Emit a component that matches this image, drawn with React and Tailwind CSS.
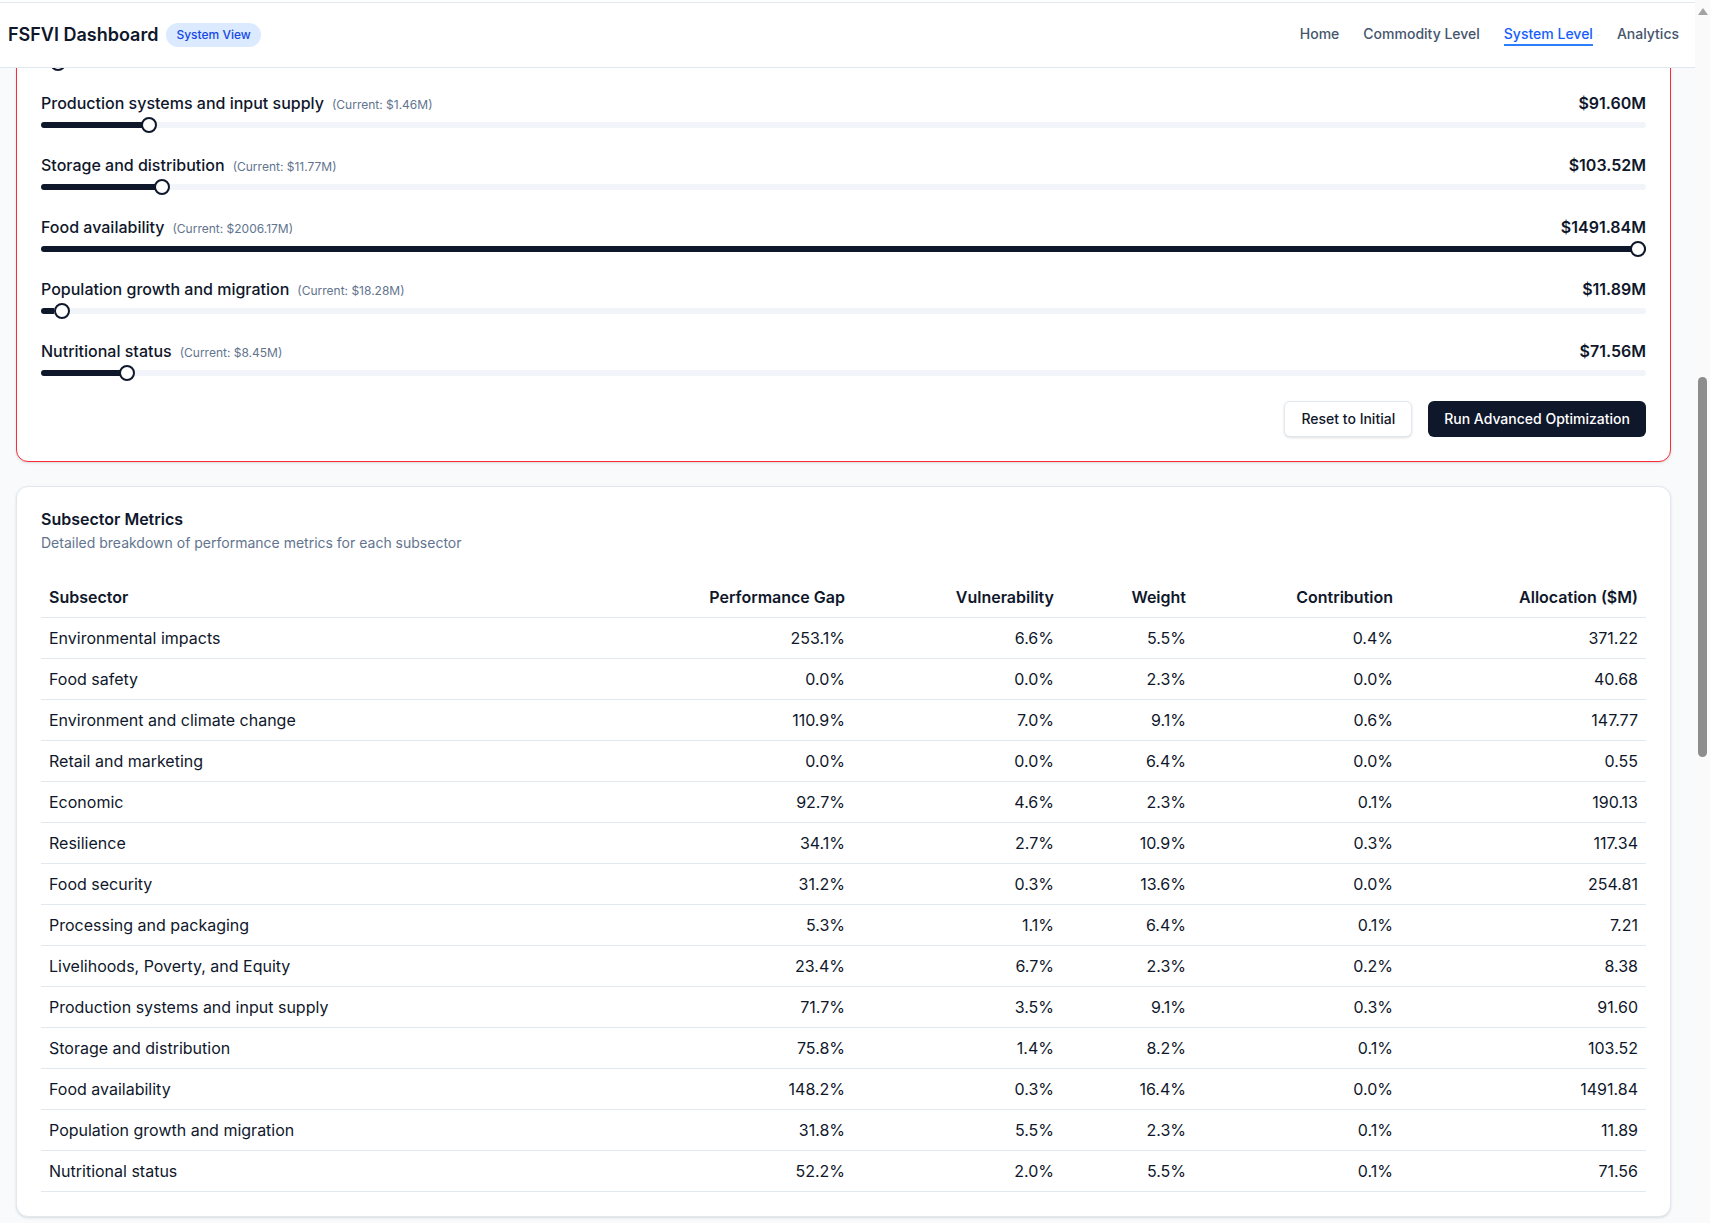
import React, { useLayoutEffect, useEffect, useRef, useState } from "react";

const rows = [
  { name: "Environmental impacts", gap: "253.1%", vul: "6.6%", w: "5.5%", c: "0.4%", a: "371.22", cur: "$41.07M" },
  { name: "Food safety", gap: "0.0%", vul: "0.0%", w: "2.3%", c: "0.0%", a: "40.68", cur: "$52.90M" },
  { name: "Environment and climate change", gap: "110.9%", vul: "7.0%", w: "9.1%", c: "0.6%", a: "147.77", cur: "$23.18M" },
  { name: "Retail and marketing", gap: "0.0%", vul: "0.0%", w: "6.4%", c: "0.0%", a: "0.55", cur: "$0.31M" },
  { name: "Economic", gap: "92.7%", vul: "4.6%", w: "2.3%", c: "0.1%", a: "190.13", cur: "$12.64M" },
  { name: "Resilience", gap: "34.1%", vul: "2.7%", w: "10.9%", c: "0.3%", a: "117.34", cur: "$30.02M" },
  { name: "Food security", gap: "31.2%", vul: "0.3%", w: "13.6%", c: "0.0%", a: "254.81", cur: "$402.55M" },
  { name: "Processing and packaging", gap: "5.3%", vul: "1.1%", w: "6.4%", c: "0.1%", a: "7.21", cur: "$2.12M" },
  { name: "Livelihoods, Poverty, and Equity", gap: "23.4%", vul: "6.7%", w: "2.3%", c: "0.2%", a: "8.38", cur: "$4.73M", pct: 0.57 },
  { name: "Production systems and input supply", gap: "71.7%", vul: "3.5%", w: "9.1%", c: "0.3%", a: "91.60", cur: "$1.46M", pct: 6.32, anchor: true },
  { name: "Storage and distribution", gap: "75.8%", vul: "1.4%", w: "8.2%", c: "0.1%", a: "103.52", cur: "$11.77M", pct: 7.11 },
  { name: "Food availability", gap: "148.2%", vul: "0.3%", w: "16.4%", c: "0.0%", a: "1491.84", cur: "$2006.17M", pct: 100 },
  { name: "Population growth and migration", gap: "31.8%", vul: "5.5%", w: "2.3%", c: "0.1%", a: "11.89", cur: "$18.28M", pct: 0.79 },
  { name: "Nutritional status", gap: "52.2%", vul: "2.0%", w: "5.5%", c: "0.1%", a: "71.56", cur: "$8.45M", pct: 4.91 },
];

function pctOf(r) {
  if (r.pct !== undefined) return r.pct;
  return Math.min(100, (parseFloat(r.a) / 1491.84) * 100);
}

function Slider({ pct }) {
  return (
    <div className="relative flex h-4 w-full items-center">
      <div className="relative h-1.5 w-full overflow-hidden rounded-full bg-slate-100">
        <div className="absolute inset-y-0 left-0 bg-slate-900" style={{ width: `${pct}%` }} />
      </div>
      <span
        className="absolute top-0 h-4 w-4 rounded-full border-2 border-slate-900 bg-white"
        style={{ left: `calc(${pct}% - ${(pct * 16) / 100}px)` }}
      />
    </div>
  );
}

function StatCard({ label, value, sub }) {
  return (
    <div className="rounded-xl border border-slate-200 bg-white p-6 shadow-sm">
      <div className="text-sm font-medium text-slate-500">{label}</div>
      <div className="mt-2 text-2xl font-bold text-slate-900">{value}</div>
      <div className="mt-1 text-xs text-slate-500">{sub}</div>
    </div>
  );
}

function Field({ label, value }) {
  return (
    <div>
      <div className="text-sm font-medium text-slate-700">{label}</div>
      <div className="mt-2 flex h-10 items-center rounded-md border border-slate-200 bg-white px-3 text-sm text-slate-900">
        {value}
      </div>
    </div>
  );
}

export default function App() {
  const scrollRef = useRef(null);
  const anchorRef = useRef(null);
  const [thumb, setThumb] = useState({ top: 377, height: 380 });

  const updateThumb = () => {
    const s = scrollRef.current;
    if (!s) return;
    const track = s.clientHeight - 30;
    const len = Math.max(20, (track * s.clientHeight) / s.scrollHeight);
    const range = s.scrollHeight - s.clientHeight;
    const top = 15 + (range > 0 ? (s.scrollTop / range) * (track - len) : 0);
    setThumb({ top, height: len });
  };

  const adjust = () => {
    const s = scrollRef.current;
    const a = anchorRef.current;
    if (!s || !a) return;
    const delta = a.getBoundingClientRect().top - s.getBoundingClientRect().top - 91;
    s.scrollTop = s.scrollTop + delta;
    updateThumb();
  };

  useLayoutEffect(() => {
    adjust();
  }, []);

  useEffect(() => {
    if (document.fonts && document.fonts.ready) {
      document.fonts.ready.then(adjust);
    }
  }, []);

  return (
    <div className="flex h-screen bg-slate-50 font-['Inter',sans-serif] text-slate-900">
      <div
        ref={scrollRef}
        onScroll={updateThumb}
        className="min-w-0 flex-1 overflow-y-scroll [scrollbar-width:none] [&::-webkit-scrollbar]:hidden"
      >
        <header className="sticky top-0 z-20 bg-white">
          <div className="h-[2px]" />
          <div className="flex h-[66px] items-center justify-between border-y border-slate-200 pl-2 pr-4">
            <div className="flex items-center gap-2">
              <span className="text-lg font-semibold text-slate-900">FSFVI Dashboard</span>
              <span className="rounded-full bg-blue-100 px-2.5 py-1 text-xs font-medium leading-4 text-blue-700">
                System View
              </span>
            </div>
            <nav className="flex items-center gap-6 text-sm font-medium">
              <a className="border-b-2 border-transparent text-slate-600">Home</a>
              <a className="border-b-2 border-transparent text-slate-600">Commodity Level</a>
              <a className="border-b-2 border-blue-500 text-blue-600">System Level</a>
              <a className="border-b-2 border-transparent text-slate-600">Analytics</a>
            </nav>
          </div>
        </header>

        <main className="space-y-6 pb-6 pl-4 pr-6 pt-6">
          <div>
            <h1 className="text-2xl font-bold text-slate-900">System-Level Analysis</h1>
            <p className="mt-1 text-sm text-slate-500">
              Food System Financial Vulnerability Index across all subsectors
            </p>
          </div>

          <div className="grid grid-cols-4 gap-6">
            <StatCard label="FSFVI Score" value="0.0342" sub="Lower is better" />
            <StatCard label="Total Budget" value="$2,930.52M" sub="Across 14 subsectors" />
            <StatCard label="Subsectors" value="14" sub="Active in analysis" />
            <StatCard label="Projected Improvement" value="18.4%" sub="After optimization" />
          </div>

          <div className="rounded-xl border border-slate-200 bg-white shadow-sm">
            <div className="p-6">
              <div className="text-base font-semibold leading-none">Optimization Settings</div>
              <div className="mt-1.5 text-sm text-slate-500">Configure constraints for the optimizer</div>
            </div>
            <div className="grid grid-cols-3 gap-x-4 gap-y-1 px-6 pb-6">
              <Field label="Budget constraint" value="$2,930.52M" />
              <Field label="Method" value="Hybrid gradient" />
              <Field label="Minimum allocation" value="$0.10M" />
              <Field label="Maximum change" value="50%" />
              <Field label="Iterations" value="1000" />
              <Field label="Tolerance" value="0.0001" />
            </div>
          </div>

          <div className="rounded-xl border border-red-500 bg-white shadow-sm">
            <div className="p-6">
              <div className="text-base font-semibold leading-none">Advanced Budget Optimization</div>
              <div className="mt-1.5 text-sm text-slate-500">
                Adjust allocations for each subsector and run the optimizer
              </div>
            </div>
            <div className="px-6 pb-6">
              <div className="space-y-5">
                {rows.map((r) => (
                  <div key={r.name} ref={r.anchor ? anchorRef : undefined}>
                    <div className="mb-0.5 flex h-6 items-center justify-between">
                      <div>
                        <span className="text-base font-medium text-slate-900">{r.name}</span>
                        <span className="ml-2 text-xs text-slate-500">(Current: {r.cur})</span>
                      </div>
                      <span className="text-base font-semibold text-slate-900">${r.a}M</span>
                    </div>
                    <Slider pct={pctOf(r)} />
                  </div>
                ))}
              </div>
              <div className="mt-5 flex justify-end gap-4">
                <button className="h-9 rounded-md border border-slate-200 bg-white px-4 text-sm font-medium text-slate-900 shadow-sm">
                  Reset to Initial
                </button>
                <button className="h-9 rounded-md bg-slate-900 px-4 text-sm font-medium text-white">
                  Run Advanced Optimization
                </button>
              </div>
            </div>
          </div>

          <div className="rounded-xl border border-slate-200 bg-white shadow-sm">
            <div className="p-6">
              <div className="text-base font-semibold leading-none">Subsector Metrics</div>
              <div className="mt-1.5 text-sm text-slate-500">
                Detailed breakdown of performance metrics for each subsector
              </div>
            </div>
            <div className="px-6 pb-6">
              <table className="w-full table-fixed text-base">
                <colgroup>
                  <col className="w-[531px]" />
                  <col className="w-[281px]" />
                  <col className="w-[209px]" />
                  <col className="w-[132px]" />
                  <col className="w-[207px]" />
                  <col className="w-[245px]" />
                </colgroup>
                <thead>
                  <tr className="border-b border-slate-200">
                    <th className="h-10 px-2 text-left font-semibold text-slate-900">Subsector</th>
                    <th className="h-10 px-2 text-right font-semibold text-slate-900">Performance Gap</th>
                    <th className="h-10 px-2 text-right font-semibold text-slate-900">Vulnerability</th>
                    <th className="h-10 px-2 text-right font-semibold text-slate-900">Weight</th>
                    <th className="h-10 px-2 text-right font-semibold text-slate-900">Contribution</th>
                    <th className="h-10 px-2 text-right font-semibold text-slate-900">Allocation ($M)</th>
                  </tr>
                </thead>
                <tbody>
                  {rows.map((r) => (
                    <tr key={r.name} className="border-b border-slate-200">
                      <td className="p-2 text-left">{r.name}</td>
                      <td className="p-2 text-right">{r.gap}</td>
                      <td className="p-2 text-right">{r.vul}</td>
                      <td className="p-2 text-right">{r.w}</td>
                      <td className="p-2 text-right">{r.c}</td>
                      <td className="p-2 text-right">{r.a}</td>
                    </tr>
                  ))}
                </tbody>
              </table>
            </div>
          </div>

          <div className="rounded-xl border border-slate-200 bg-white shadow-sm">
            <div className="p-6">
              <div className="text-base font-semibold leading-none">Allocation Comparison</div>
              <div className="mt-1.5 text-sm text-slate-500">Current versus optimized allocation by subsector</div>
            </div>
            <div className="space-y-3 px-6 pb-6">
              {rows.map((r) => (
                <div key={r.name} className="flex items-center gap-4">
                  <div className="w-[300px] text-sm text-slate-700">{r.name}</div>
                  <div className="h-8 flex-1 rounded bg-slate-100">
                    <div className="h-8 rounded bg-slate-900" style={{ width: `${Math.max(0.5, pctOf(r))}%` }} />
                  </div>
                  <div className="w-[90px] text-right text-sm font-medium">{r.a}</div>
                </div>
              ))}
            </div>
          </div>

          <div className="rounded-xl border border-slate-200 bg-white shadow-sm">
            <div className="p-6">
              <div className="text-base font-semibold leading-none">Key Insights</div>
              <div className="mt-1.5 text-sm text-slate-500">Highlights from the latest optimization run</div>
            </div>
            <div className="space-y-4 px-6 pb-6">
              {rows.slice(0, 6).map((r) => (
                <div key={r.name} className="rounded-lg border border-slate-200 p-4">
                  <div className="text-sm font-medium text-slate-900">{r.name}</div>
                  <div className="mt-1 text-sm text-slate-500">
                    Performance gap of {r.gap} with vulnerability {r.vul}; recommended allocation ${r.a}M.
                  </div>
                </div>
              ))}
            </div>
          </div>
        </main>
      </div>

      <div className="relative flex w-[15px] shrink-0 flex-col items-center bg-[#fafafa] pt-[8px]">
        <span className="h-0 w-0 border-x-[5px] border-b-[7px] border-x-transparent border-b-[#a3a3a3]" />
        <span
          className="absolute left-[3px] w-[9px] rounded-full bg-[#8d8d8d]"
          style={{ top: `${thumb.top}px`, height: `${thumb.height}px` }}
        />
      </div>
    </div>
  );
}
